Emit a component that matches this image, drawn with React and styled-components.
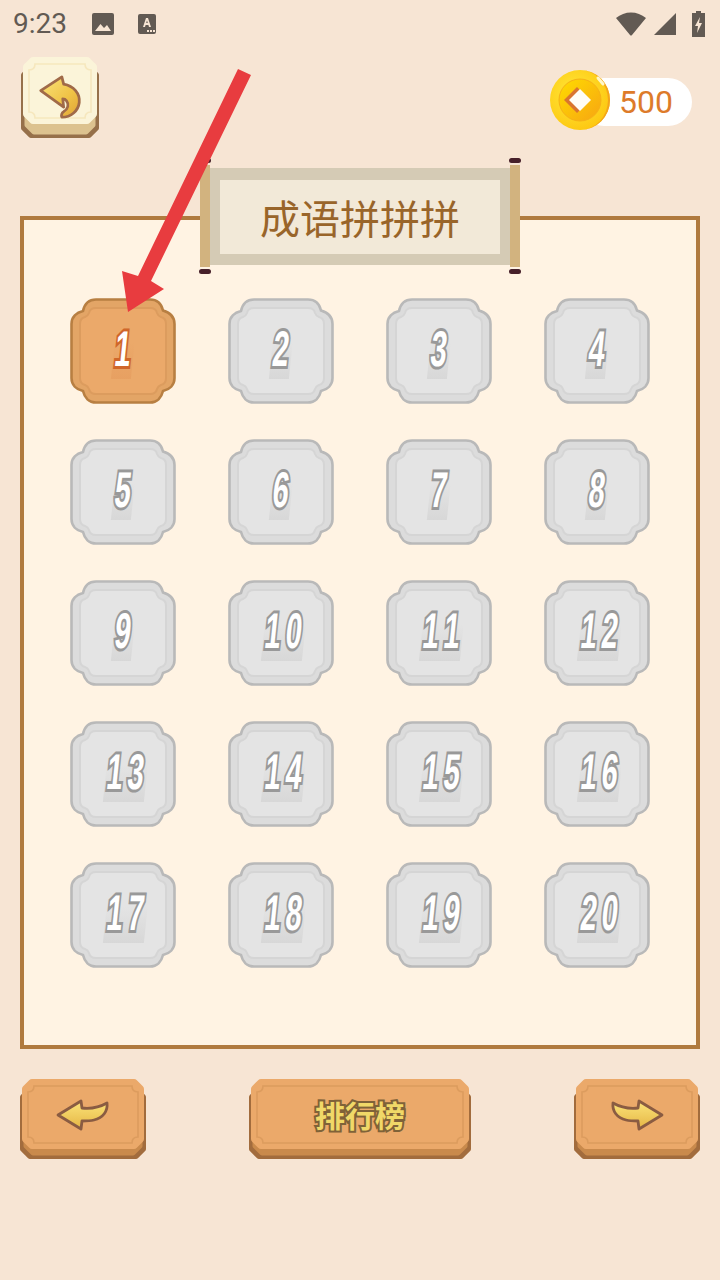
import React from "react";
import styled, { createGlobalStyle } from "styled-components";

const TONES = {
  wood: { dark: "#a26c3d", lip: "#c98a4c", face: "#eba96a", line: "#dc9c5e" },
  cream: { dark: "#96704a", lip: "#dcc28f", face: "#fbf4d9", line: "#f6e7bd" },
};

const TILE_TONES = {
  on: { edge: "#b87f42", outer: "#e3a566", inner: "#eba96a", line: "#dc9c5e", stroke: "#d0672a", shade: "rgba(214,120,60,0.18)" },
  off: { edge: "#b9b9b9", outer: "#dcdcdc", inner: "#e4e4e4", line: "#d5d5d5", stroke: "#999999", shade: "rgba(150,150,150,0.16)" },
};

const TILE_OUTER =
  "M26 1.5H80C87 1.5 91.5 6 93 12.5C99.5 14.5 104.5 19 104.5 26V80C104.5 87 99.5 91.5 93 93C91.5 99.5 87 104.5 80 104.5H26C19 104.5 14.5 99.5 13 93C6.5 91.5 1.5 87 1.5 80V26C1.5 19 6.5 14.5 13 13C14.5 6 19 1.5 26 1.5Z";

const TILE_INNER =
  "M26 10H80Q86 10 87 15Q88 18 91 19Q96 20 96 26V80Q96 86 91 87Q88 88 87 91Q86 96 80 96H26Q20 96 19 91Q18 88 15 87Q10 86 10 80V26Q10 20 15 19Q18 18 19 15Q20 10 26 10Z";

const octagon = (x0, y0, x1, y1, c) =>
  `M${x0 + c} ${y0}H${x1 - c}L${x1} ${y0 + c}V${y1 - c}L${x1 - c} ${y1}H${x0 + c}L${x0} ${y1 - c}V${y0 + c}Z`;

const notched = (x0, y0, x1, y1, c) =>
  `M${x0 + c} ${y0}H${x1 - c}Q${x1 - c} ${y0 + c} ${x1} ${y0 + c}V${y1 - c}Q${x1 - c} ${y1 - c} ${x1 - c} ${y1}H${x0 + c}Q${x0 + c} ${y1 - c} ${x0} ${y1 - c}V${y0 + c}Q${x0 + c} ${y0 + c} ${x0 + c} ${y0}Z`;

const App = () => {
  const levels = Array.from({ length: 20 }, (_, i) => i + 1);

  return (
    <Page>
      <GlobalStyle />
      <StatusBar>
        <Clock>9:23</Clock>
        <StatusIcons>
          <svg width="24" height="24" viewBox="0 0 24 24">
            <rect x="1" y="1" width="22" height="22" rx="2" fill="#625a53" />
            <path d="M4 19L9.5 12L13 16L16 13L20 19Z" fill="#f7e5d4" />
          </svg>
          <svg width="20" height="24" viewBox="0 0 20 24">
            <rect x="1" y="2" width="18" height="20" rx="2" fill="#625a53" />
            <path d="M6 15L9 6H11L14 15H12L11.4 13H8.6L8 15ZM9.2 11H10.8L10 8.4Z" fill="#f7e5d4" />
            <rect x="10" y="18" width="2" height="2" fill="#f7e5d4" />
            <rect x="13" y="18" width="2" height="2" fill="#f7e5d4" />
            <rect x="16" y="18" width="2" height="2" fill="#f7e5d4" />
          </svg>
        </StatusIcons>
        <StatusRight>
          <svg width="32" height="26" viewBox="0 0 32 26">
            <path d="M1 7C9.5 -0.5 22.5 -0.5 31 7L17 24C16.4 24.8 15.6 24.8 15 24Z" fill="#625a53" />
          </svg>
          <svg width="24" height="24" viewBox="0 0 24 24">
            <path d="M1 23L23 1V23Z" fill="#625a53" />
          </svg>
          <svg width="16" height="26" viewBox="0 0 16 26">
            <path d="M5 0H10V2H14V26H1V2H5Z" fill="#625a53" />
            <path d="M9 6L4 15H7L6 22L11 12H8Z" fill="#f7e5d4" />
          </svg>
        </StatusRight>
      </StatusBar>

      <Header>
        <WoodButton $w={78} $h={81} aria-label="back">
          <WoodFace w={78} h={81} tone="cream" lipDepth={14} />
          <IconSlot>
            <BackArrow width="44" height="46" viewBox="0 0 48 50">
              <defs>
                <linearGradient id="backFill" x1="0" y1="0" x2="1" y2="1">
                  <stop offset="0" stopColor="#f9e27a" />
                  <stop offset="0.6" stopColor="#f0c346" />
                  <stop offset="1" stopColor="#dfa236" />
                </linearGradient>
              </defs>
              <path
                d="M3 18L26 3L28 11C39 13 46 21 45 31C44 40 36 47 26 47C25 45 26 42 28 41C33 38 34 33 31 29C30 27.5 29 27 27 27L28 36Z"
                fill="url(#backFill)"
                stroke="#a06a48"
                strokeWidth="3"
                strokeLinejoin="round"
              />
            </BackArrow>
          </IconSlot>
        </WoodButton>

        <CoinBox>
          <CoinIcon width="62" height="62" viewBox="0 0 62 62">
            <defs>
              <radialGradient id="coinRim" cx="0.4" cy="0.4" r="0.7">
                <stop offset="0" stopColor="#ffe83a" />
                <stop offset="1" stopColor="#fdc40d" />
              </radialGradient>
              <linearGradient id="coinCore" x1="0" y1="0" x2="1" y2="1">
                <stop offset="0" stopColor="#ffdc00" />
                <stop offset="1" stopColor="#f7a512" />
              </linearGradient>
            </defs>
            <circle cx="31" cy="31" r="30" fill="url(#coinRim)" />
            <path d="M31 1A30 30 0 0 1 31 61A28 30 0 0 0 31 1Z" fill="#f4a41c" />
            <circle cx="31" cy="31" r="21" fill="url(#coinCore)" stroke="#f6b018" strokeWidth="1" />
            <path d="M49 9L54 15" stroke="#fff6c8" strokeWidth="3" strokeLinecap="round" />
            <path d="M28 18L15 31L28 44L41 31Z" fill="#d9752e" />
            <path d="M31 20L20 31L31 42L42 31Z" fill="#fffdf5" />
          </CoinIcon>
          <CoinCount>500</CoinCount>
        </CoinBox>
      </Header>

      <Panel>
        <Scroll>
          <Rod />
          <ScrollMat>
            <ScrollPaper>成语拼拼拼</ScrollPaper>
          </ScrollMat>
          <Rod />
        </Scroll>

        <LevelGrid>
          {levels.map((n) => (
            <LevelTile key={n} n={n} active={n === 1} />
          ))}
        </LevelGrid>
      </Panel>

      <Footer>
        <WoodButton $w={126} $h={80} aria-label="previous">
          <WoodFace w={126} h={80} tone="wood" lipDepth={10} />
          <IconSlot>
            <PageArrow />
          </IconSlot>
        </WoodButton>
        <WoodButton $w={222} $h={80}>
          <WoodFace w={222} h={80} tone="wood" lipDepth={10} />
          <IconSlot>
            <RankLabel>排行榜</RankLabel>
          </IconSlot>
        </WoodButton>
        <WoodButton $w={126} $h={80} aria-label="next">
          <WoodFace w={126} h={80} tone="wood" lipDepth={10} />
          <IconSlot>
            <PageArrow $flip />
          </IconSlot>
        </WoodButton>
      </Footer>

      <PointerArrow width="140" height="260" viewBox="0 0 140 260">
        <path d="M126 2L139 8L39 214L52 222L16 245L10 204L26 209Z" fill="#e83c3f" />
      </PointerArrow>
    </Page>
  );
};

export default App;

const WoodFace = ({ w, h, tone, lipDepth }) => {
  const c = TONES[tone];
  const faceBottom = h - lipDepth;
  return (
    <FaceSvg width={w} height={h} viewBox={`0 0 ${w} ${h}`}>
      <path d={octagon(3, 11, w - 3, h - 3, 7)} fill={c.dark} stroke={c.dark} strokeWidth="6" strokeLinejoin="round" />
      <path d={octagon(6, 11, w - 6, h - 6, 7)} fill={c.lip} stroke={c.lip} strokeWidth="5" strokeLinejoin="round" />
      <path d={octagon(6, 4, w - 6, faceBottom - 4, 6)} fill={c.face} stroke={c.face} strokeWidth="8" strokeLinejoin="round" />
      <path d={notched(8, 7, w - 8, faceBottom - 6, 6)} fill="none" stroke={c.line} strokeWidth="1.6" />
    </FaceSvg>
  );
};

const PageArrow = styled(({ className }) => (
  <svg className={className} width="54" height="34" viewBox="0 0 54 34">
    <defs>
      <linearGradient id="pageFill" x1="0" y1="0" x2="0" y2="1">
        <stop offset="0" stopColor="#fbe47a" />
        <stop offset="1" stopColor="#e5b544" />
      </linearGradient>
    </defs>
    <path
      d="M2 17L25 3L26 10C35 11 44 9 51 5C52 13 47 20 38 22C34 23 30 23 26 23L25 31Z"
      fill="url(#pageFill)"
      stroke="#8a5c42"
      strokeWidth="2.8"
      strokeLinejoin="round"
    />
  </svg>
))`
  transform: ${(p) => (p.$flip ? "scaleX(-1)" : "none")};
`;

const LevelTile = ({ n, active }) => {
  const c = TILE_TONES[active ? "on" : "off"];
  const digits = String(n).split("");
  return (
    <Tile>
      <TileShape width="106" height="106" viewBox="0 0 106 106">
        <path d={TILE_OUTER} fill={c.outer} stroke={c.edge} strokeWidth="2.6" />
        <path d={TILE_INNER} fill={c.inner} stroke={c.line} strokeWidth="2" />
      </TileShape>
      <TileNumber $stroke={c.stroke} $shade={c.shade} $wide={digits.length > 1}>
        {digits.map((d, i) => (
          <Digit key={i}>{d}</Digit>
        ))}
      </TileNumber>
    </Tile>
  );
};

const GlobalStyle = createGlobalStyle`
  html, body {
    margin: 0;
    padding: 0;
    background: #f7e5d4;
  }
  button {
    border: none;
    background: none;
    padding: 0;
  }
`;

const Page = styled.div`
  position: relative;
  width: 720px;
  height: 1280px;
  overflow: hidden;
  background: #f7e5d4;
  font-family: Roboto, "Noto Sans CJK SC", sans-serif;
`;

const StatusBar = styled.div`
  height: 48px;
  display: flex;
  align-items: center;
  padding: 0 13px 0 13px;
  box-sizing: border-box;
  color: #625a53;
`;

const Clock = styled.span`
  font-size: 28px;
  line-height: 1;
  width: 78px;
`;

const StatusIcons = styled.div`
  display: flex;
  align-items: center;
  gap: 22px;
`;

const StatusRight = styled.div`
  margin-left: auto;
  display: flex;
  align-items: center;
  gap: 6px;
  & > svg:last-child {
    margin-left: 8px;
  }
`;

const Header = styled.div`
  height: 168px;
  box-sizing: border-box;
  padding: 9px 28px 0 21px;
  display: flex;
  justify-content: space-between;
  align-items: flex-start;
`;

const WoodButton = styled.button`
  position: relative;
  display: block;
  width: ${(p) => p.$w}px;
  height: ${(p) => p.$h}px;
  flex-shrink: 0;
`;

const FaceSvg = styled.svg`
  display: block;
`;

const IconSlot = styled.div`
  position: absolute;
  left: 0;
  right: 0;
  top: 0;
  bottom: 9px;
  display: flex;
  align-items: center;
  justify-content: center;
`;

const BackArrow = styled.svg`
  margin-top: 8px;
`;

const CoinBox = styled.div`
  position: relative;
  width: 112px;
  height: 48px;
  margin-top: 21px;
  background: #fff;
  border-radius: 24px;
  display: flex;
  align-items: center;
  justify-content: flex-end;
  padding-right: 19px;
  box-sizing: border-box;
`;

const CoinIcon = styled.svg`
  position: absolute;
  left: -31px;
  top: -9px;
`;

const CoinCount = styled.span`
  font-size: 32px;
  color: #dd7b2a;
`;

const Panel = styled.div`
  position: relative;
  height: 833px;
  margin: 0 20px;
  box-sizing: border-box;
  border: 4px solid #b07a3e;
  background: #fff3e3;
  padding: 78px 0 0 46px;
`;

const Scroll = styled.div`
  position: absolute;
  left: 176px;
  top: -62px;
  width: 320px;
  height: 116px;
  display: flex;
  align-items: center;
`;

const Rod = styled.div`
  position: relative;
  width: 10px;
  height: 102px;
  background: #d2b37f;
  flex-shrink: 0;
  &::before,
  &::after {
    content: "";
    position: absolute;
    left: -1px;
    width: 12px;
    height: 5px;
    border-radius: 3px;
    background: #47202a;
  }
  &::before {
    top: -7px;
  }
  &::after {
    bottom: -7px;
  }
`;

const ScrollMat = styled.div`
  flex: 1;
  height: 97px;
  background: #d5cbb5;
  padding: 12px 10px 11px;
  box-sizing: border-box;
  display: flex;
`;

const ScrollPaper = styled.div`
  flex: 1;
  background: #f2e9d8;
  color: #99652a;
  font-family: "Noto Sans CJK SC", sans-serif;
  font-size: 40px;
  line-height: 1;
  display: flex;
  align-items: center;
  justify-content: center;
`;

const LevelGrid = styled.div`
  display: grid;
  grid-template-columns: repeat(4, 106px);
  column-gap: 52px;
  row-gap: 35px;
`;

const Tile = styled.div`
  position: relative;
  width: 106px;
  height: 106px;
  display: flex;
  align-items: center;
  justify-content: center;
`;

const TileShape = styled.svg`
  position: absolute;
  left: 0;
  top: 0;
`;

const TileNumber = styled.div`
  position: relative;
  display: flex;
  gap: 3px;
  margin: 0 ${(p) => (p.$wide ? "-4px" : "0")} 5px 0;
  transform: skewX(-6deg);
  font-family: "Liberation Sans", sans-serif;
  font-weight: 700;
  font-size: 50px;
  line-height: 50px;
  color: #fff;
  -webkit-text-stroke: 6px ${(p) => p.$stroke};
  paint-order: stroke fill;
  &::before {
    content: "";
    position: absolute;
    left: 0;
    right: -2px;
    top: 18px;
    bottom: -5px;
    background: linear-gradient(to bottom, transparent, ${(p) => p.$shade});
  }
`;

const Digit = styled.span`
  position: relative;
  width: 18px;
  display: flex;
  justify-content: center;
  transform: scaleX(0.58);
`;

const RankLabel = styled.span`
  font-family: "Noto Sans CJK SC", sans-serif;
  font-weight: 700;
  font-size: 30px;
  line-height: 1;
  margin-bottom: 2px;
  color: #f0d868;
  -webkit-text-stroke: 4px #7f6238;
  paint-order: stroke fill;
`;

const Footer = styled.div`
  margin-top: 30px;
  padding: 0 20px;
  display: flex;
  justify-content: space-between;
`;

const PointerArrow = styled.svg`
  position: absolute;
  left: 112px;
  top: 67px;
  overflow: visible;
`;
